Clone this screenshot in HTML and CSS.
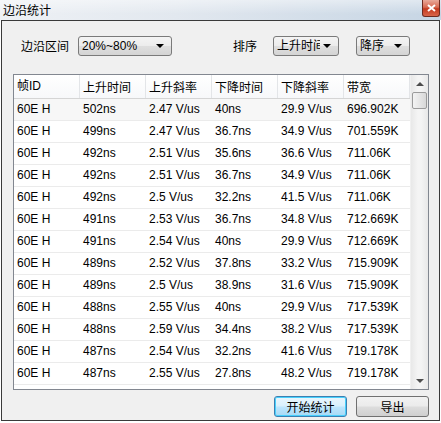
FILE: index.html
```html
<!DOCTYPE html>
<html>
<head>
<meta charset="utf-8">
<link rel="stylesheet" href="styles.css">
</head>
<body>
<div class="titlebar">
  <span class="title">边沿统计</span>
  <div class="close"><svg width="9" height="8" viewBox="0 0 9 8"><path d="M1 1 L8 7 M8 1 L1 7" stroke="#fff" stroke-width="2"/></svg></div>
</div>
<div class="frame">
  <div class="controls">
    <span class="label">边沿区间</span>
    <div class="combo combo-range"><span class="ctext">20%~80%</span><span class="arrow"></span></div>
    <span class="label sort-label">排序</span>
    <div class="combo combo-key"><span class="ctext">上升时间</span><span class="arrow"></span></div>
    <div class="combo combo-order"><span class="ctext">降序</span><span class="arrow"></span></div>
  </div>
  <div class="list">
    <div class="grid">
      <div class="row head">
        <div class="cell">帧ID</div><div class="cell">上升时间</div><div class="cell">上升斜率</div><div class="cell">下降时间</div><div class="cell">下降斜率</div><div class="cell">带宽</div>
      </div>
      <div class="row first"><div class="cell">60E H</div><div class="cell">502ns</div><div class="cell">2.47 V/us</div><div class="cell">40ns</div><div class="cell">29.9 V/us</div><div class="cell">696.902K</div></div>
      <div class="row"><div class="cell">60E H</div><div class="cell">499ns</div><div class="cell">2.47 V/us</div><div class="cell">36.7ns</div><div class="cell">34.9 V/us</div><div class="cell">701.559K</div></div>
      <div class="row"><div class="cell">60E H</div><div class="cell">492ns</div><div class="cell">2.51 V/us</div><div class="cell">35.6ns</div><div class="cell">36.6 V/us</div><div class="cell">711.06K</div></div>
      <div class="row"><div class="cell">60E H</div><div class="cell">492ns</div><div class="cell">2.51 V/us</div><div class="cell">36.7ns</div><div class="cell">34.9 V/us</div><div class="cell">711.06K</div></div>
      <div class="row"><div class="cell">60E H</div><div class="cell">492ns</div><div class="cell">2.5 V/us</div><div class="cell">32.2ns</div><div class="cell">41.5 V/us</div><div class="cell">711.06K</div></div>
      <div class="row"><div class="cell">60E H</div><div class="cell">491ns</div><div class="cell">2.53 V/us</div><div class="cell">36.7ns</div><div class="cell">34.8 V/us</div><div class="cell">712.669K</div></div>
      <div class="row"><div class="cell">60E H</div><div class="cell">491ns</div><div class="cell">2.54 V/us</div><div class="cell">40ns</div><div class="cell">29.9 V/us</div><div class="cell">712.669K</div></div>
      <div class="row"><div class="cell">60E H</div><div class="cell">489ns</div><div class="cell">2.52 V/us</div><div class="cell">37.8ns</div><div class="cell">33.2 V/us</div><div class="cell">715.909K</div></div>
      <div class="row"><div class="cell">60E H</div><div class="cell">489ns</div><div class="cell">2.5 V/us</div><div class="cell">38.9ns</div><div class="cell">31.6 V/us</div><div class="cell">715.909K</div></div>
      <div class="row"><div class="cell">60E H</div><div class="cell">488ns</div><div class="cell">2.55 V/us</div><div class="cell">40ns</div><div class="cell">29.9 V/us</div><div class="cell">717.539K</div></div>
      <div class="row"><div class="cell">60E H</div><div class="cell">488ns</div><div class="cell">2.59 V/us</div><div class="cell">34.4ns</div><div class="cell">38.2 V/us</div><div class="cell">717.539K</div></div>
      <div class="row"><div class="cell">60E H</div><div class="cell">487ns</div><div class="cell">2.54 V/us</div><div class="cell">32.2ns</div><div class="cell">41.6 V/us</div><div class="cell">719.178K</div></div>
      <div class="row"><div class="cell">60E H</div><div class="cell">487ns</div><div class="cell">2.55 V/us</div><div class="cell">27.8ns</div><div class="cell">48.2 V/us</div><div class="cell">719.178K</div></div>
    </div>
    <div class="scrollbar">
      <div class="sbtn"><span class="up"></span></div>
      <div class="thumb"></div>
      <div class="track"></div>
      <div class="sbtn"><span class="down"></span></div>
    </div>
  </div>
  <div class="buttons">
    <div class="btn focused">开始统计</div>
    <div class="btn">导出</div>
  </div>
</div>
</body>
</html>
```
FILE: styles.css
```css
html, body {
  margin: 0;
  padding: 0;
  background: #ffffff;
}
body {
  width: 441px;
  height: 423px;
  overflow: hidden;
  font-family: "Liberation Sans", "Noto Sans CJK SC", sans-serif;
  font-size: 12px;
  color: #000;
}
.titlebar {
  height: 20px;
  display: flex;
  align-items: flex-start;
  justify-content: space-between;
  background: linear-gradient(to bottom, rgba(255,255,255,0.45), rgba(255,255,255,0) 70%),
              linear-gradient(to right, #eef1f5 0%, #e2e8ef 40%, #c6d5e4 100%);
}
.title {
  padding-left: 3px;
  line-height: 19px;
  font-family: "Noto Sans CJK SC", sans-serif;
  font-size: 12px;
}
.close {
  width: 18px;
  height: 17px;
  margin-right: 1px;
  box-sizing: border-box;
  border: 1px solid #6d2a20;
  border-top: none;
  border-radius: 0 0 3px 3px;
  background: linear-gradient(to bottom, #e9a99a 0%, #d86a52 45%, #c3391f 55%, #d8654a 100%);
  display: flex;
  align-items: center;
  justify-content: center;
}
.frame {
  margin-left: 1px;
  width: 439px;
  height: 401px;
  box-sizing: border-box;
  border: 1px solid #3a3a3a;
  background: #f0f0f0;
  display: flex;
  flex-direction: column;
}
.controls {
  margin-top: 15px;
  height: 20px;
  display: flex;
  align-items: center;
  padding-left: 19px;
}
.label {
  font-family: "Noto Sans CJK SC", sans-serif;
  font-size: 12px;
  line-height: 20px;
  margin-right: 9px;
}
.sort-label {
  margin-left: 61px;
  margin-right: 16px;
}
.combo {
  height: 20px;
  box-sizing: border-box;
  border: 1px solid #7a7a7a;
  border-radius: 3px;
  background: linear-gradient(to bottom, #f4f4f4 0%, #ececec 48%, #dedede 52%, #d4d4d4 100%);
  display: flex;
  align-items: center;
  padding-left: 3px;
  padding-right: 7px;
  overflow: hidden;
}
.ctext {
  flex: 1;
  overflow: hidden;
  white-space: nowrap;
  line-height: 18px;
}
.combo-range { width: 94px; }
.combo-key { width: 66px; margin-right: 17px; }
.combo-order { width: 54px; }
.arrow {
  flex: none;
  width: 0;
  height: 0;
  margin-left: 3px;
  border-left: 4px solid transparent;
  border-right: 4px solid transparent;
  border-top: 4px solid #000;
}
.list {
  margin-top: 18px;
  margin-left: 11px;
  width: 416px;
  height: 316px;
  box-sizing: border-box;
  border: 1px solid #828790;
  background: #fff;
  display: flex;
  overflow: hidden;
}
.grid {
  flex: 1;
  overflow: hidden;
}
.row {
  display: grid;
  grid-template-columns: 66px 66px 66px 66px 66px 1fr;
  height: 22px;
  box-sizing: border-box;
  border-bottom: 1px solid #ebebeb;
  line-height: 21px;
}
.row.first { background: #f7f7f7; }
.row.head {
  height: 24px;
  line-height: 23px;
  border-bottom: 1px solid #d5d5d5;
  background: linear-gradient(to bottom, #ffffff, #f7f8fa);
}
.cell {
  padding-left: 3px;
  white-space: nowrap;
  overflow: hidden;
}
.head .cell {
  border-right: 1px solid #e3e5e8;
  font-family: "Noto Sans CJK SC", sans-serif;
}
.head .cell:first-child {
  font-family: "Liberation Sans", "Noto Sans CJK SC", sans-serif;
}
.scrollbar {
  width: 17px;
  flex: none;
  background: linear-gradient(to right, #e8e8e8, #f4f4f4 40%, #f4f4f4 60%, #e8e8e8);
  display: flex;
  flex-direction: column;
  border-left: 1px solid #f0f0f0;
}
.sbtn {
  height: 17px;
  display: flex;
  align-items: center;
  justify-content: center;
}
.up {
  width: 0; height: 0;
  border-left: 4px solid transparent;
  border-right: 4px solid transparent;
  border-bottom: 4px solid #4d4d4d;
}
.down {
  width: 0; height: 0;
  border-left: 4px solid transparent;
  border-right: 4px solid transparent;
  border-top: 4px solid #4d4d4d;
}
.thumb {
  height: 17px;
  margin: 0 0 0 1px;
  width: 15px;
  box-sizing: border-box;
  border: 1px solid #9b9b9b;
  border-radius: 2px;
  background: linear-gradient(to right, #f3f3f3, #e6e6e6 50%, #d8d8d8);
}
.track { flex: 1; }
.buttons {
  margin-top: 6px;
  height: 21px;
  display: flex;
  justify-content: flex-end;
  padding-right: 10px;
  gap: 9px;
}
.btn {
  width: 73px;
  height: 21px;
  box-sizing: border-box;
  border: 1px solid #707070;
  border-radius: 3px;
  background: linear-gradient(to bottom, #f2f2f2 0%, #ebebeb 48%, #dddddd 52%, #cfcfcf 100%);
  display: flex;
  align-items: center;
  justify-content: center;
  font-family: "Noto Sans CJK SC", sans-serif;
  font-size: 12px;
  line-height: 19px;
}
.btn.focused {
  border-color: #3c7fb1;
  box-shadow: inset 0 0 0 1px #48d0fc;
  background: linear-gradient(to bottom, #eaf6fd 0%, #d9f0fc 48%, #bee6fd 52%, #a7d9f5 100%);
}
```
